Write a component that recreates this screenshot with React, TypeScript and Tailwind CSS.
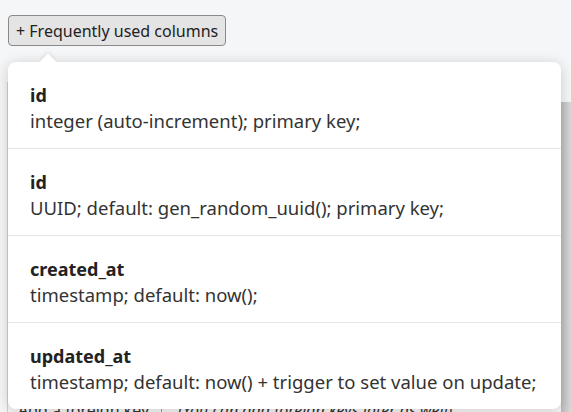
import React from "react";

const columns = [
  { name: "id", desc: "integer (auto-increment); primary key;" },
  { name: "id", desc: "UUID; default: gen_random_uuid(); primary key;" },
  { name: "created_at", desc: "timestamp; default: now();" },
  { name: "updated_at", desc: "timestamp; default: now() + trigger to set value on update;" },
];

function App() {
  return (
    <div
      className="relative flex h-[412px] w-[571px] flex-col overflow-hidden bg-[#f5f6f7] text-[#2b2b2b]"
      style={{ fontFamily: "'Noto Sans', 'Open Sans', sans-serif" }}
    >
      <div className="px-2 pt-[15px]">
        <button className="h-[31px] rounded-[4px] border border-[#8a8a8a] bg-[#e4e4e4] px-[7px] text-[16px] leading-[20px] text-[#222]">
          + Frequently used columns
        </button>
      </div>

      {/* page content behind the popup */}
      <div className="mt-[36px] flex flex-1 pl-[7px]">
        <div className="flex flex-1 flex-col justify-end border-l border-[#d0d0d0] bg-[#f7f7f7]">
          <div className="flex translate-y-[10px] gap-4 pl-[10px] text-[16px] text-[#333]">
            <span className="border-r border-[#999] pr-3">Add a foreign key</span>
            <span className="italic">(You can add foreign keys later as well)</span>
          </div>
        </div>
        <div className="mt-[20px] w-[10px] bg-gradient-to-r from-[#bdbdbd] to-[#d9d9d9]" />
      </div>

      {/* popup */}
      <div className="absolute left-2 top-[62px] w-[553px] rounded-[8px] bg-white shadow-[0_2px_14px_rgba(0,0,0,0.18)]">
        <div className="absolute -top-[6px] left-[34px] h-3 w-3 rotate-45 bg-white shadow-[-2px_-2px_4px_rgba(0,0,0,0.06)]" />
        <ul className="relative">
          {columns.map((c, i) => (
            <li
              key={i}
              className={
                "px-[22px] pt-[20px] pb-[14px] " +
                (i < columns.length - 1 ? "border-b border-[#e6e6e6]" : "")
              }
            >
              <div className="text-[18px] font-bold leading-[26px] text-[#222]">{c.name}</div>
              <div className="text-[18.5px] leading-[26px] text-[#333]">{c.desc}</div>
            </li>
          ))}
        </ul>
      </div>
    </div>
  );
}

export default App;
